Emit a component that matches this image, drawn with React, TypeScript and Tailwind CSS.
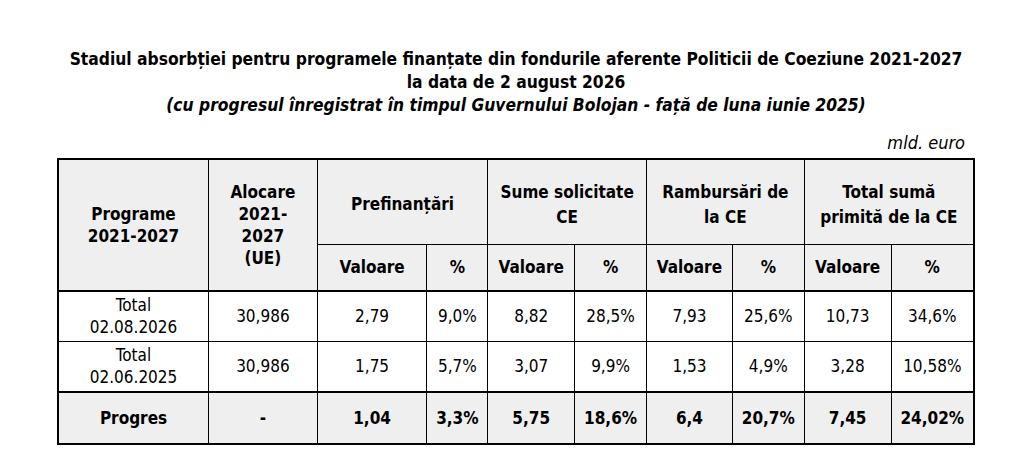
const rows = [
  {
    label: ['Total', '02.08.2026'],
    alloc: '30,986',
    values: ['2,79', '9,0%', '8,82', '28,5%', '7,93', '25,6%', '10,73', '34,6%'],
  },
  {
    label: ['Total', '02.06.2025'],
    alloc: '30,986',
    values: ['1,75', '5,7%', '3,07', '9,9%', '1,53', '4,9%', '3,28', '10,58%'],
  },
]

const progres = ['1,04', '3,3%', '5,75', '18,6%', '6,4', '20,7%', '7,45', '24,02%']

const groups = [
  ['Prefinanțări'],
  ['Sume solicitate', 'CE'],
  ['Rambursări de', 'la CE'],
  ['Total sumă', 'primită de la CE'],
]

const colWidths = [151, 109, 110, 61, 87, 72, 86, 72, 87, 83]

export default function App() {
  return (
    <div
      className="w-[1022px] h-[467px] bg-white text-black"
      style={{ fontFamily: '"DejaVu Sans Condensed", "DejaVu Sans", sans-serif' }}
    >
      <div className="w-[918px] ml-[57px] pt-[48px]">
        <div className="text-center font-bold text-[17.3px] leading-[23px]">
          <p>Stadiul absorbției pentru programele finanțate din fondurile aferente Politicii de Coeziune 2021-2027</p>
          <p>la data de 2 august 2026</p>
          <p className="italic">(cu progresul înregistrat în timpul Guvernului Bolojan - față de luna iunie 2025)</p>
        </div>
        <p className="text-right italic text-[18px] leading-[20px] mt-[16px] mb-[5px] pr-[10px]">mld. euro</p>

        <table className="table-fixed border-collapse border-2 border-black text-[17px] leading-[22px] text-center">
          <colgroup>
            {colWidths.map((w, i) => (
              <col key={i} style={{ width: w }} />
            ))}
          </colgroup>
          <thead className="bg-[#efefef] font-bold">
            <tr className="h-[85px]">
              <th rowSpan={2} className="border border-black font-bold">
                Programe
                <br />
                2021-2027
              </th>
              <th rowSpan={2} className="border border-black font-bold">
                Alocare
                <br />
                2021-
                <br />
                2027
                <br />
                (UE)
              </th>
              {groups.map((g) => (
                <th key={g[0]} colSpan={2} className="border border-black font-bold leading-[25px] pt-[6px]">
                  {g.map((line, i) => (
                    <span key={i}>
                      {i > 0 && <br />}
                      {line}
                    </span>
                  ))}
                </th>
              ))}
            </tr>
            <tr className="h-[47px]">
              {groups.map((g) => [
                <th key={g[0] + 'v'} className="border border-black font-bold">
                  Valoare
                </th>,
                <th key={g[0] + 'p'} className="border border-black font-bold">
                  %
                </th>,
              ])}
            </tr>
          </thead>
          <tbody>
            {rows.map((r, idx) => (
              <tr key={r.label[1]} className={idx === 0 ? 'h-[50px] border-t-2 border-black' : 'h-[51px]'}>
                <td className="border border-black">
                  {r.label[0]}
                  <br />
                  {r.label[1]}
                </td>
                <td className="border border-black">{r.alloc}</td>
                {r.values.map((v, i) => (
                  <td key={i} className="border border-black">
                    {v}
                  </td>
                ))}
              </tr>
            ))}
            <tr className="h-[52px] bg-[#efefef] font-bold border-t-2 border-black">
              <td className="border border-black border-t-2">Progres</td>
              <td className="border border-black border-t-2">-</td>
              {progres.map((v, i) => (
                <td key={i} className="border border-black border-t-2">
                  {v}
                </td>
              ))}
            </tr>
          </tbody>
        </table>
      </div>
    </div>
  )
}
